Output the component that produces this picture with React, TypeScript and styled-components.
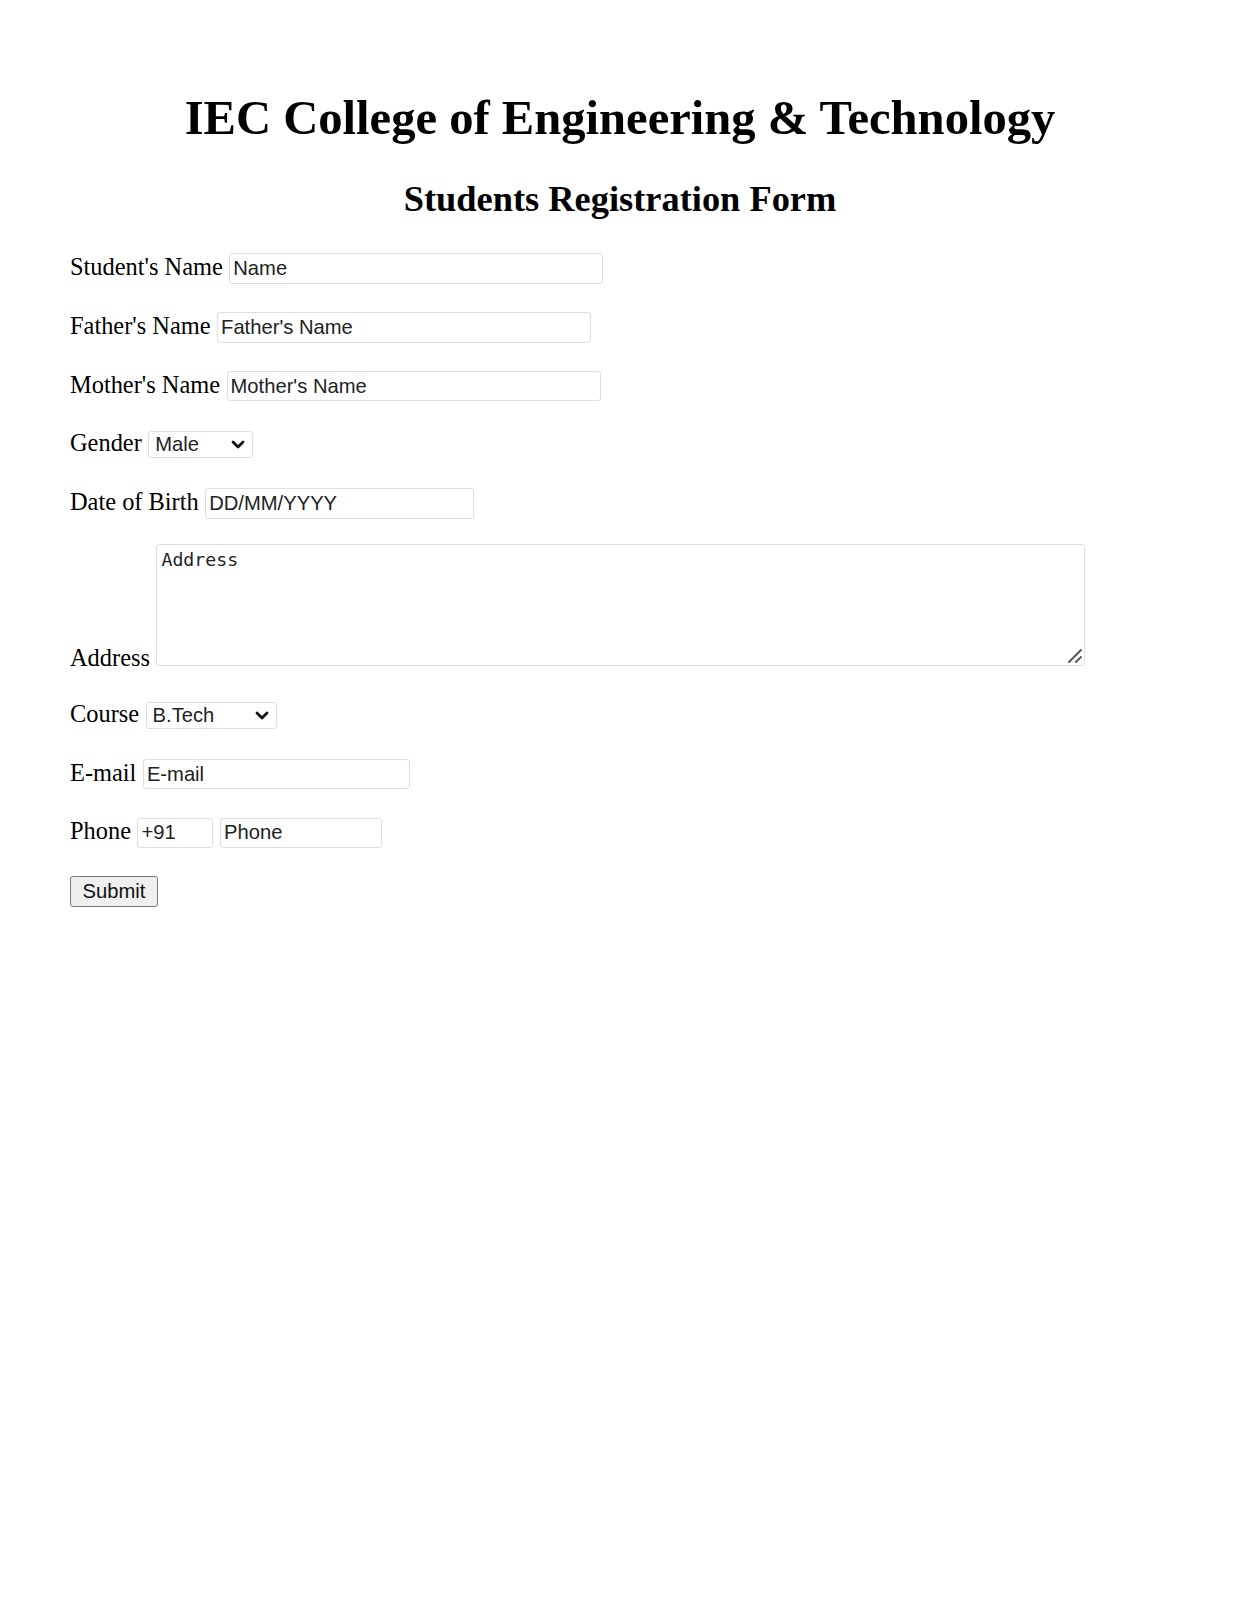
import React from "react";
import styled, { createGlobalStyle } from "styled-components";

const GlobalStyle = createGlobalStyle`
  * { box-sizing: border-box; }
  html, body { margin: 0; padding: 0; background: #ffffff; }
  body {
    font-family: "Liberation Serif", "Times New Roman", serif;
    color: #000000;
    min-height: 1600px;
  }
`;

const Page = styled.div`
  width: 1236px;
  min-height: 1600px;
  display: flex;
  flex-direction: column;
`;

const Header = styled.header`
  display: flex;
  flex-direction: column;
  align-items: center;
  padding: 90px 10px 0 14px;
`;

const Title = styled.h1`
  margin: 0;
  font-size: 48.6px;
  font-weight: 700;
  line-height: normal;
  text-align: center;
`;

const Subtitle = styled.h2`
  margin: 32px 0 0;
  font-size: 36.4px;
  font-weight: 700;
  line-height: normal;
  text-align: center;
`;

const Form = styled.form`
  display: flex;
  flex-direction: column;
  gap: 28px;
  padding: 0 0 0 70px;
  margin-top: 33px;
`;

const Row = styled.div<{ $end?: boolean }>`
  display: flex;
  align-items: ${(p) => (p.$end ? "flex-end" : "baseline")};
  gap: 6.5px;
`;

const Label = styled.label`
  font-size: 24.4px;
  line-height: normal;
  white-space: nowrap;
`;

const TextInput = styled.input<{ $w: number }>`
  width: ${(p) => p.$w}px;
  height: 30.5px;
  padding: 0 3px;
  border: 1px solid #dedede;
  border-radius: 3px;
  background: #ffffff;
  font-family: "Liberation Sans", Arial, sans-serif;
  font-size: 20.2px;
  color: #222222;
  outline: none;
  &::placeholder { color: #222222; opacity: 1; }
`;

const SelectWrap = styled.span`
  position: relative;
  display: inline-flex;
  margin-bottom: 2px;
`;

const Select = styled.select<{ $w: number }>`
  appearance: none;
  -webkit-appearance: none;
  width: ${(p) => p.$w}px;
  height: 27px;
  padding: 0 6px;
  border: 1px solid #dedede;
  border-radius: 3px;
  background: #ffffff;
  font-family: "Liberation Sans", Arial, sans-serif;
  font-size: 20.2px;
  color: #222222;
  outline: none;
`;

const Chevron = styled.svg`
  position: absolute;
  right: 8px;
  top: 50%;
  width: 14px;
  height: 9px;
  margin-top: -4.5px;
  pointer-events: none;
`;

const AreaWrap = styled.span`
  position: relative;
  display: inline-flex;
  margin: -2.5px 0 6px;
`;

const TextArea = styled.textarea`
  width: 929px;
  height: 122px;
  padding: 4px 4px;
  border: 1px solid #dedede;
  border-radius: 3px;
  font-family: "DejaVu Sans Mono", "Liberation Mono", monospace;
  font-size: 18.2px;
  color: #222222;
  outline: none;
  resize: none;
  &::placeholder { color: #222222; opacity: 1; }
`;

const Grabber = styled.svg`
  position: absolute;
  right: 2px;
  bottom: 2px;
  width: 16px;
  height: 16px;
  pointer-events: none;
`;

const SubmitButton = styled.button`
  align-self: flex-start;
  width: 88px;
  height: 31px;
  padding: 0;
  border: 1.5px solid #7a7a7a;
  border-radius: 3px;
  background: #efefef;
  font-family: "Liberation Sans", Arial, sans-serif;
  font-size: 20.2px;
  color: #111111;
`;

const ChevronIcon = () => (
  <Chevron viewBox="0 0 14 9">
    <path
      d="M2 2 L7 7 L12 2"
      fill="none"
      stroke="#111"
      strokeWidth="2.8"
      strokeLinecap="round"
      strokeLinejoin="round"
    />
  </Chevron>
);

const GrabberIcon = () => (
  <Grabber viewBox="0 0 16 16">
    <path d="M2 14 L14 2" stroke="#555" strokeWidth="2" strokeLinecap="round" />
    <path d="M9 14 L14 9" stroke="#555" strokeWidth="2" strokeLinecap="round" />
  </Grabber>
);

export default function App() {
  return (
    <>
      <GlobalStyle />
      <Page>
        <Header>
          <Title>IEC College of Engineering &amp; Technology</Title>
          <Subtitle>Students Registration Form</Subtitle>
        </Header>
        <Form onSubmit={(e) => e.preventDefault()}>
          <Row>
            <Label>Student's Name</Label>
            <TextInput $w={374} placeholder="Name" />
          </Row>
          <Row>
            <Label>Father's Name</Label>
            <TextInput $w={374} placeholder="Father's Name" />
          </Row>
          <Row>
            <Label>Mother's Name</Label>
            <TextInput $w={374} placeholder="Mother's Name" />
          </Row>
          <Row>
            <Label>Gender</Label>
            <SelectWrap>
              <Select $w={105} defaultValue="Male">
                <option>Male</option>
                <option>Female</option>
              </Select>
              <ChevronIcon />
            </SelectWrap>
          </Row>
          <Row>
            <Label>Date of Birth</Label>
            <TextInput $w={269} placeholder="DD/MM/YYYY" />
          </Row>
          <Row $end>
            <Label>Address</Label>
            <AreaWrap>
              <TextArea placeholder="Address" />
              <GrabberIcon />
            </AreaWrap>
          </Row>
          <Row>
            <Label>Course</Label>
            <SelectWrap>
              <Select $w={131} defaultValue="B.Tech">
                <option>B.Tech</option>
                <option>M.Tech</option>
                <option>MBA</option>
              </Select>
              <ChevronIcon />
            </SelectWrap>
          </Row>
          <Row>
            <Label>E-mail</Label>
            <TextInput $w={267} placeholder="E-mail" />
          </Row>
          <Row>
            <Label>Phone</Label>
            <TextInput $w={76} defaultValue="+91" />
            <TextInput $w={162} placeholder="Phone" />
          </Row>
          <SubmitButton type="submit">Submit</SubmitButton>
        </Form>
      </Page>
    </>
  );
}
